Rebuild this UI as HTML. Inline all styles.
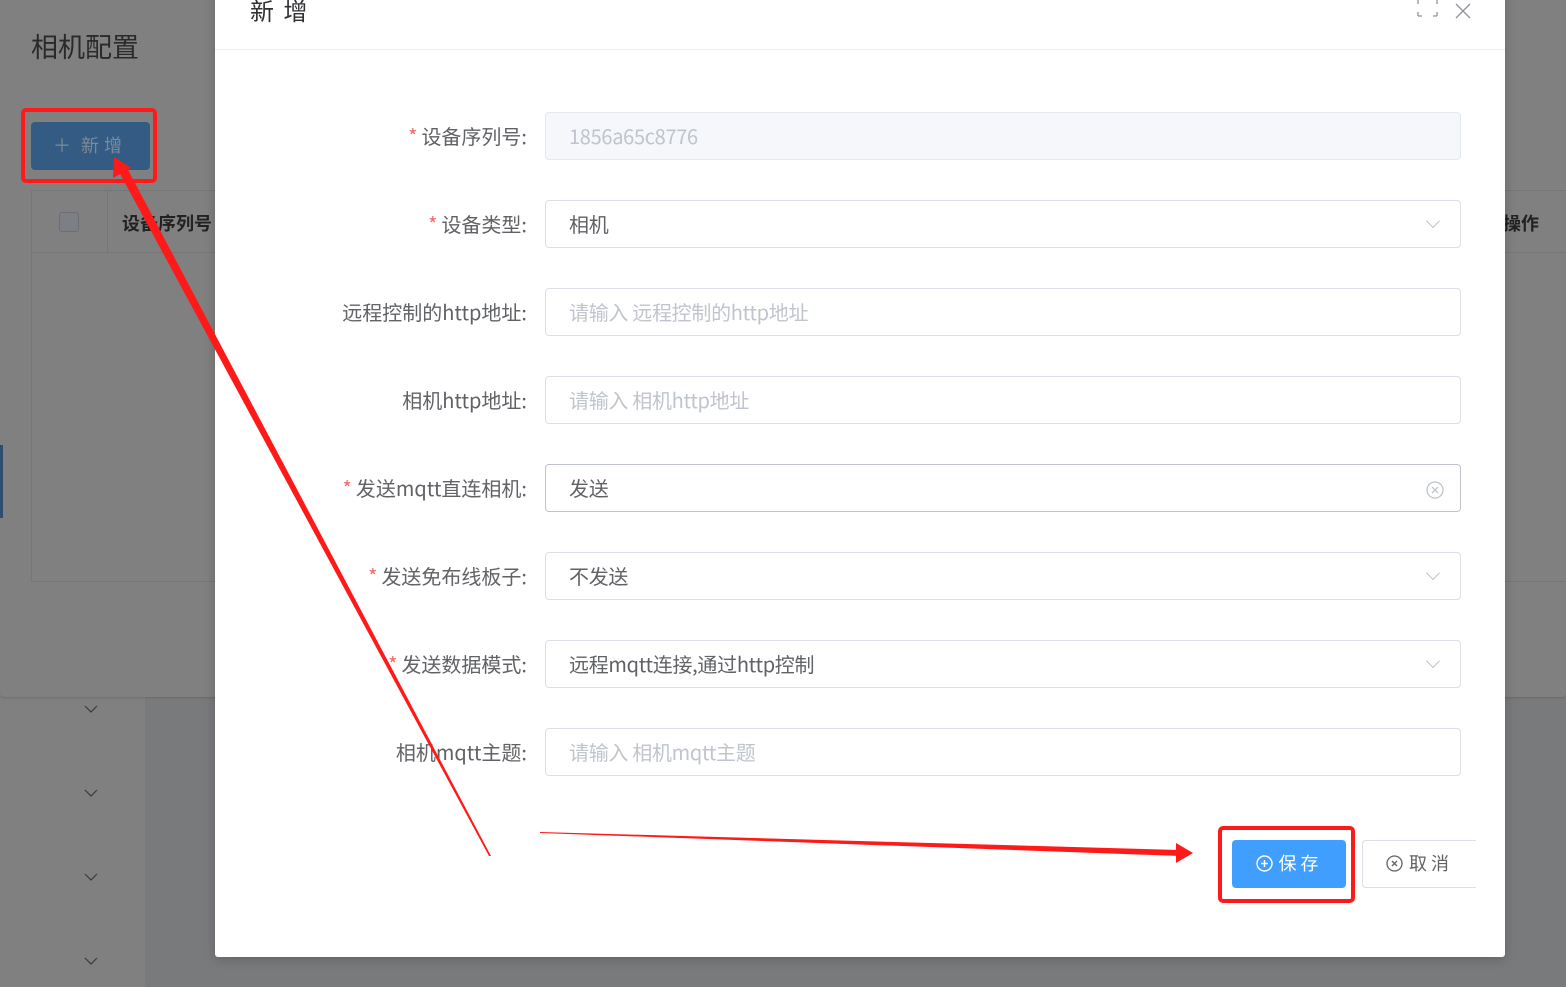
<!DOCTYPE html>
<html><head><meta charset="utf-8"><style>
*{margin:0;padding:0;box-sizing:border-box}
body{width:1566px;height:987px;overflow:hidden;position:relative;background:#797a7c;font-family:"Liberation Sans","Noto Sans CJK SC",sans-serif}
.abs{position:absolute}
.lbl{position:absolute;right:1039px;font-size:20px;color:#606266;line-height:48px;padding-top:0;white-space:nowrap;font-family:"Noto Sans CJK SC",sans-serif;letter-spacing:0}
.lbl .s{color:#f56c6c;margin-right:4px}
.inp{position:absolute;left:545px;width:916px;height:48px;border:1px solid #dcdfe6;border-radius:4px;background:#fff;font-size:20px;line-height:46px;padding-left:23px;color:#606266;font-family:"Noto Sans CJK SC",sans-serif;letter-spacing:-0.3px}
.ph{color:#c0c4cc}
.chev{position:absolute;right:22px;top:15px;width:10px;height:10px;border-right:1.5px solid #c0c4cc;border-bottom:1.5px solid #c0c4cc;transform:rotate(45deg)}
</style></head><body>
<div class="abs" style="left:0;top:0;width:145px;height:987px;background:#808080"></div>
<div class="abs" style="left:0;top:0;width:1566px;height:697px;background:#808080;border-radius:0 0 4px 4px;box-shadow:0 1px 2px rgba(0,0,0,.15)"></div>
<div class="abs" style="left:31px;top:28px;font-size:27px;color:#2a2a2a;font-family:'Noto Sans CJK SC',sans-serif;line-height:36px">相机配置</div>
<div class="abs" style="left:31px;top:122px;width:119px;height:48px;background:#335b84;border-radius:4px;color:#7f8a96;font-size:18px;line-height:48px;padding-left:22px">＋&nbsp; 新 增</div>
<div class="abs" style="left:31px;top:190px;width:1600px;height:392px;border:1px solid #767676"></div>
<div class="abs" style="left:31px;top:252px;width:1600px;height:1px;background:#767676"></div>
<div class="abs" style="left:107px;top:190px;width:1px;height:62px;background:#767676"></div>
<div class="abs" style="left:59px;top:212px;width:20px;height:20px;border:1px solid #6e6e6e;border-radius:3px;background:#7c7f86"></div>
<div class="abs" style="left:122px;top:210px;font-size:18px;font-weight:bold;color:#222">设备序列号</div>
<div class="abs" style="left:1503px;top:210px;font-size:18px;font-weight:bold;color:#222">操作</div>
<div class="abs" style="left:0;top:445px;width:3px;height:73px;background:#2d4f6d"></div>
<svg class="abs" style="left:0;top:0" width="145" height="987">
<g fill="none" stroke="#3a3a3a" stroke-width="1.2"><path d="M85 706l6 6 6-6M85 790l6 6 6-6M85 874l6 6 6-6M85 958l6 6 6-6"/></g></svg>
<div class="abs" style="left:215px;top:-10px;width:1290px;height:967px;background:#fff;border-radius:0 0 3px 3px;box-shadow:0 2px 12px rgba(0,0,0,.2)"></div>
<div class="abs" style="left:215px;top:49px;width:1290px;height:1px;background:#ebeef5"></div>
<div class="abs" style="left:250px;top:-8px;font-size:24px;color:#303133;letter-spacing:2px;font-family:'Noto Sans CJK SC',sans-serif;line-height:36px">新 增</div>
<svg class="abs" style="left:1410px;top:0" width="70" height="25"><g fill="none" stroke="#909399" stroke-width="1.3">
<path d="M8 0v4M8 16v-4M8 16h4M27 0v4M27 16v-4M27 16h-4M46 4l14 14M60 4l-14 14"/></g></svg>

<div class="lbl" style="top:112px"><span class="s">*</span>设备序列号:</div>
<div class="inp" style="top:112px;background:#f5f7fa;border-color:#e4e7ed;color:#c0c4cc">1856a65c8776</div>
<div class="lbl" style="top:200px"><span class="s">*</span>设备类型:</div>
<div class="inp" style="top:200px">相机<i class="chev"></i></div>
<div class="lbl" style="top:288px">远程控制的http地址:</div>
<div class="inp ph" style="top:288px">请输入 远程控制的http地址</div>
<div class="lbl" style="top:376px">相机http地址:</div>
<div class="inp ph" style="top:376px">请输入 相机http地址</div>
<div class="lbl" style="top:464px"><span class="s">*</span>发送mqtt直连相机:</div>
<div class="inp" style="top:464px;border-color:#c0c4cc">发送<svg class="abs" style="right:15px;top:15px" width="20" height="20"><circle cx="10" cy="10" r="8" fill="none" stroke="#c0c4cc" stroke-width="1.3"/><path d="M7 7l6 6M13 7l-6 6" stroke="#c0c4cc" stroke-width="1.3"/></svg></div>
<div class="lbl" style="top:552px"><span class="s">*</span>发送免布线板子:</div>
<div class="inp" style="top:552px">不发送<i class="chev"></i></div>
<div class="lbl" style="top:640px"><span class="s">*</span>发送数据模式:</div>
<div class="inp" style="top:640px">远程mqtt连接,通过http控制<i class="chev"></i></div>
<div class="lbl" style="top:728px">相机mqtt主题:</div>
<div class="inp ph" style="top:728px">请输入 相机mqtt主题</div>

<div class="abs" style="left:1232px;top:840px;width:114px;height:48px;background:#409eff;border-radius:4px;color:#fff;font-size:18px;line-height:48px;text-align:center;letter-spacing:4px"><svg width="17" height="17" style="vertical-align:-2px;margin-right:6px"><circle cx="8.5" cy="8.5" r="7.5" fill="none" stroke="#fff" stroke-width="1.4"/><path d="M8.5 5v7M5 8.5h7" stroke="#fff" stroke-width="1.4"/></svg>保存</div>
<div class="abs" style="left:1362px;top:840px;width:114px;height:48px;border:1px solid #dcdfe6;border-right:none;border-radius:4px 0 0 4px;color:#606266;font-size:18px;line-height:46px;padding-left:23px;letter-spacing:4px"><svg width="17" height="17" style="vertical-align:-2px;margin-right:6px"><circle cx="8.5" cy="8.5" r="7.5" fill="none" stroke="#606266" stroke-width="1.3"/><path d="M6 6l5 5M11 6l-5 5" stroke="#606266" stroke-width="1.3"/></svg>取消</div>

<svg class="abs" style="left:0;top:0" width="1566" height="987">
<rect x="23" y="110" width="132" height="71" rx="3" fill="none" stroke="#ff1a1a" stroke-width="4"/>
<rect x="1220" y="828" width="133" height="73" rx="3" fill="none" stroke="#ff1a1a" stroke-width="4"/>
<polygon points="118,170 126,166 491,856 489,856" fill="#ff1a1a"/>
<polygon points="114,157 131,168 113,178" fill="#ff1a1a"/>
<polygon points="540,832 1180,850 1180,856 540,833" fill="#ff1a1a"/>
<polygon points="1193,853 1176,843 1176,863" fill="#ff1a1a"/>
</svg>
</body></html>
